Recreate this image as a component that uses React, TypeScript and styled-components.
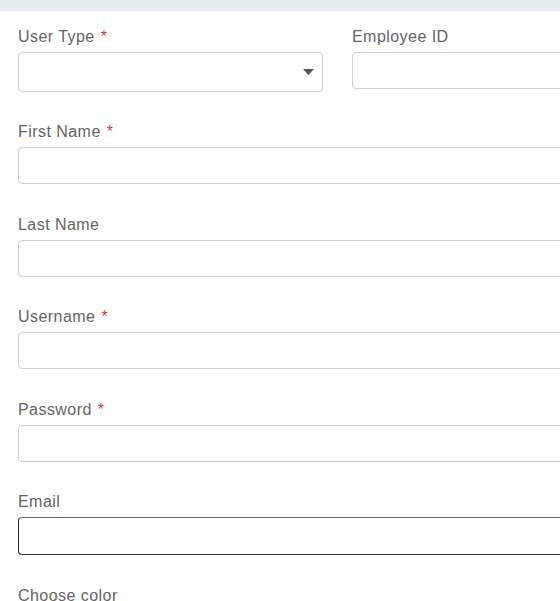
import React from "react";
import styled, { createGlobalStyle } from "styled-components";

const Global = createGlobalStyle`
  html, body {
    margin: 0;
    padding: 0;
    background: #ffffff;
    overflow: hidden;
  }
  body {
    font-family: "Liberation Sans", Arial, sans-serif;
  }
  * { box-sizing: border-box; }
`;

const TopBand = styled.div`
  height: 11px;
  background: #e7eef0;
`;

const Form = styled.form`
  width: 660px;
  padding: 15.5px 0 0 18px;
  display: flex;
  flex-direction: column;
  gap: 30.6px;
`;

const Row = styled.div`
  display: grid;
  grid-template-columns: 305px 305px;
  column-gap: 29px;
  align-items: start;
`;

const Field = styled.div`
  display: flex;
  flex-direction: column;
  gap: 5px;
`;

const Label = styled.label`
  font-size: 16px;
  line-height: 20px;
  letter-spacing: 0.45px;
  color: #646464;
`;

const Required = styled.span`
  color: #d4343a;
  margin-left: 6px;
`;

const Input = styled.input<{ $focused?: boolean; $h?: number }>`
  display: block;
  width: 100%;
  height: ${(p) => p.$h ?? 37}px;
  margin: 0;
  padding: 0 10px;
  background: #ffffff;
  border: 1px solid ${(p) => (p.$focused ? "#2a2a2a" : "#cfcfcf")};
  border-top-color: ${(p) => (p.$focused ? "#666666" : "#cfcfcf")};
  border-top-width: ${(p) => (p.$focused ? "1.5px" : "1px")};
  border-radius: 4px;
  font: inherit;
  outline: none;
`;

const SelectWrap = styled.div`
  position: relative;
  height: 40px;
`;

const Select = styled.select`
  appearance: none;
  -webkit-appearance: none;
  display: block;
  width: 100%;
  height: 40px;
  margin: 0;
  padding: 0 10px;
  background: #ffffff;
  border: 1px solid #cfcfcf;
  border-radius: 4px;
  font: inherit;
  outline: none;
`;

const Caret = styled.svg`
  position: absolute;
  right: 9.5px;
  top: 17px;
  width: 11px;
  height: 6px;
  pointer-events: none;
`;

type F = { label: string; required?: boolean; focused?: boolean };

const fields: F[] = [
  { label: "First Name", required: true },
  { label: "Last Name" },
  { label: "Username", required: true },
  { label: "Password", required: true },
  { label: "Email", focused: true },
];

const LabelText: React.FC<{ label: string; required?: boolean }> = ({ label, required }) => (
  <Label>
    {label}
    {required && <Required>*</Required>}
  </Label>
);

export default function App() {
  return (
    <>
      <Global />
      <TopBand />
      <Form>
        <Row>
          <Field>
            <LabelText label="User Type" required />
            <SelectWrap>
              <Select defaultValue="">
                <option value=""></option>
              </Select>
              <Caret viewBox="0 0 11 6">
                <path d="M0 0 H11 L5.5 6 Z" fill="#555555" />
              </Caret>
            </SelectWrap>
          </Field>
          <Field>
            <LabelText label="Employee ID" />
            <Input type="text" />
          </Field>
        </Row>
        {fields.map((f) => (
          <Field key={f.label}>
            <LabelText label={f.label} required={f.required} />
            <Input type={f.label === "Password" ? "password" : "text"} $focused={f.focused} $h={f.focused ? 38 : 37} />
          </Field>
        ))}
        <Field>
          <LabelText label="Choose color" />
        </Field>
      </Form>
    </>
  );
}
